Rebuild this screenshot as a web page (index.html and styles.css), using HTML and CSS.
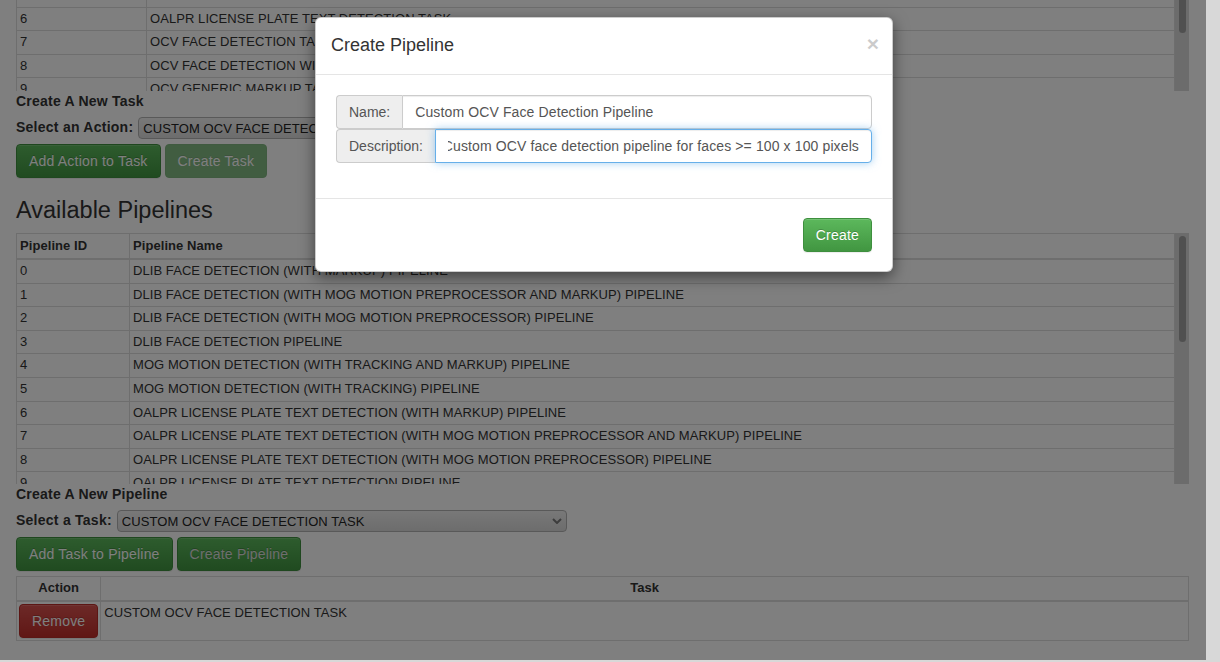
FILE: index.html
```html
<!DOCTYPE html>
<html lang="en">
<head>
<meta charset="utf-8">
<title>Create Pipeline</title>
<link rel="stylesheet" href="styles.css">
</head>
<body>
<div class="screen">
  <div class="viewport">
    <main class="page">
      <div class="scroll-box tasks-box">
        <div class="scroll-view">
          <table class="grid tasks-grid">
            <tbody>
              <tr><td class="id-col">5</td><td>MOG MOTION DETECTION TASK</td></tr>
              <tr><td class="id-col">6</td><td>OALPR LICENSE PLATE TEXT DETECTION TASK</td></tr>
              <tr><td class="id-col">7</td><td>OCV FACE DETECTION TASK</td></tr>
              <tr><td class="id-col">8</td><td>OCV FACE DETECTION WITH MARKUP TASK</td></tr>
              <tr><td class="id-col">9</td><td>OCV GENERIC MARKUP TASK</td></tr>
            </tbody>
          </table>
        </div>
        <div class="scrollbar"><div class="thumb thumb-top"></div></div>
      </div>

      <div class="form-title">Create A New Task</div>
      <div class="select-row">
        <label class="select-label" for="action-select">Select an Action:</label>
        <div class="select-wrap">
          <select id="action-select" class="select">
            <option>CUSTOM OCV FACE DETECTION ACTION</option>
          </select>
          <svg class="chevron" width="10" height="6" viewBox="0 0 10 6"><polyline points="1,1 5,5 9,1" fill="none" stroke="#7a7a7a" stroke-width="2"/></svg>
        </div>
      </div>
      <div class="btn-row">
        <button class="btn btn-success">Add Action to Task</button>
        <button class="btn btn-success" disabled>Create Task</button>
      </div>

      <h3 class="section-title">Available Pipelines</h3>

      <div class="scroll-box pipelines-box">
        <div class="scroll-view">
          <table class="grid pipelines-grid">
            <thead>
              <tr><th class="id-col">Pipeline ID</th><th>Pipeline Name</th></tr>
            </thead>
            <tbody>
              <tr><td>0</td><td>DLIB FACE DETECTION (WITH MARKUP) PIPELINE</td></tr>
              <tr><td>1</td><td>DLIB FACE DETECTION (WITH MOG MOTION PREPROCESSOR AND MARKUP) PIPELINE</td></tr>
              <tr><td>2</td><td>DLIB FACE DETECTION (WITH MOG MOTION PREPROCESSOR) PIPELINE</td></tr>
              <tr><td>3</td><td>DLIB FACE DETECTION PIPELINE</td></tr>
              <tr><td>4</td><td>MOG MOTION DETECTION (WITH TRACKING AND MARKUP) PIPELINE</td></tr>
              <tr><td>5</td><td>MOG MOTION DETECTION (WITH TRACKING) PIPELINE</td></tr>
              <tr><td>6</td><td>OALPR LICENSE PLATE TEXT DETECTION (WITH MARKUP) PIPELINE</td></tr>
              <tr><td>7</td><td>OALPR LICENSE PLATE TEXT DETECTION (WITH MOG MOTION PREPROCESSOR AND MARKUP) PIPELINE</td></tr>
              <tr><td>8</td><td>OALPR LICENSE PLATE TEXT DETECTION (WITH MOG MOTION PREPROCESSOR) PIPELINE</td></tr>
              <tr><td>9</td><td>OALPR LICENSE PLATE TEXT DETECTION PIPELINE</td></tr>
            </tbody>
          </table>
        </div>
        <div class="scrollbar"><div class="thumb thumb-pipelines"></div></div>
      </div>

      <div class="form-title">Create A New Pipeline</div>
      <div class="select-row">
        <label class="select-label" for="task-select">Select a Task:</label>
        <div class="select-wrap">
          <select id="task-select" class="select">
            <option>CUSTOM OCV FACE DETECTION TASK</option>
          </select>
          <svg class="chevron" width="10" height="6" viewBox="0 0 10 6"><polyline points="1,1 5,5 9,1" fill="none" stroke="#7a7a7a" stroke-width="2"/></svg>
        </div>
      </div>
      <div class="btn-row">
        <button class="btn btn-success">Add Task to Pipeline</button>
        <button class="btn btn-success btn-dim">Create Pipeline</button>
      </div>

      <table class="grid action-grid">
        <thead>
          <tr><th class="action-col">Action</th><th class="center">Task</th></tr>
        </thead>
        <tbody>
          <tr>
            <td class="action-cell"><button class="btn btn-danger">Remove</button></td>
            <td>CUSTOM OCV FACE DETECTION TASK</td>
          </tr>
        </tbody>
      </table>
    </main>

    <div class="backdrop"></div>

    <div class="modal">
      <div class="modal-dialog">
        <div class="modal-header">
          <h4 class="modal-title">Create Pipeline</h4>
          <button class="close" type="button">&times;</button>
        </div>
        <div class="modal-body">
          <div class="input-group">
            <span class="addon">Name:</span>
            <div class="field"><div class="field-clip"><span class="field-text">Custom OCV Face Detection Pipeline</span></div></div>
          </div>
          <div class="input-group">
            <span class="addon">Description:</span>
            <div class="field focused"><div class="field-clip end"><span class="field-text">Custom OCV face detection pipeline for faces &gt;= 100 x 100 pixels</span></div></div>
          </div>
        </div>
        <div class="modal-footer">
          <button class="btn btn-success">Create</button>
        </div>
      </div>
    </div>
  </div>
  <div class="vscroll"></div>
</div>
</body>
</html>
```
FILE: styles.css
```css
* {
  box-sizing: border-box;
}

html,
body {
  margin: 0;
  padding: 0;
}

body {
  background: #d8d8d8;
  font-family: "Liberation Sans", Arial, Helvetica, sans-serif;
  font-size: 14px;
  line-height: 1.42857;
  color: #333;
  overflow: hidden;
}

.screen {
  display: flex;
  width: 1220px;
  height: 662px;
}

.viewport {
  position: relative;
  width: 1206px;
  height: 660px;
  overflow: hidden;
  background: #fff;
}

.vscroll {
  width: 14px;
  height: 662px;
  background: #d8d8d8;
}

.page {
  padding: 0 17px 0 16px;
}

/* scrolling table boxes */
.scroll-box {
  display: flex;
}

.tasks-box {
  height: 91px;
}

.pipelines-box {
  height: 251px;
}

.scroll-view {
  flex: 1;
  overflow: hidden;
}

.scrollbar {
  width: 14px;
  background: #d8d8d8;
  padding: 3px 3px 0 4px;
}

.thumb {
  width: 7px;
  background: #a0a0a0;
  border-radius: 4px;
}

.thumb-top {
  height: 33px;
  margin-top: -3px;
  border-radius: 0 0 4px 4px;
}

.thumb-pipelines {
  height: 106px;
}

/* tables */
.grid {
  width: 100%;
  border-collapse: collapse;
  font-size: 13px;
  line-height: 15.6px;
  letter-spacing: 0.07px;
  color: #333;
}

.grid td,
.grid th {
  border: 1px solid #ddd;
  padding: 3px 3px 4px;
  text-align: left;
  vertical-align: top;
}

.grid th {
  font-weight: bold;
  border-bottom-width: 2px;
}

.tasks-grid {
  margin-top: -17px;
}

.tasks-grid .id-col {
  width: 130px;
}

.pipelines-grid th {
  padding-top: 4px;
}

.pipelines-grid .id-col {
  width: 113px;
}

.action-grid {
  margin-top: 5px;
}

.action-grid .action-col {
  width: 84px;
  text-align: center;
}

.action-grid .center {
  text-align: center;
}

.action-grid .action-cell {
  padding: 2px;
}

/* forms */
.form-title {
  font-weight: bold;
  font-size: 14px;
  line-height: 20px;
  letter-spacing: 0.22px;
}

.select-row {
  display: flex;
  align-items: center;
  gap: 5px;
  margin-top: 6px;
  height: 22px;
}

.select-label {
  font-weight: bold;
  font-size: 14px;
  letter-spacing: 0.25px;
}

.select-wrap {
  position: relative;
  width: 450px;
  height: 22px;
}

.select {
  appearance: none;
  -webkit-appearance: none;
  width: 100%;
  height: 22px;
  margin: 0;
  padding: 0 20px 0 4px;
  font-family: "Liberation Sans", Arial, Helvetica, sans-serif;
  font-size: 13px;
  letter-spacing: 0.07px;
  color: #222;
  border: 1px solid #b2b2b2;
  border-radius: 4px;
  background: linear-gradient(#f1f1f1, #dadada);
}

.chevron {
  position: absolute;
  right: 5px;
  top: 8px;
}

.btn-row {
  display: flex;
  gap: 4px;
  margin-top: 5px;
}

.section-title {
  margin: 19px 0 10px;
  font-size: 23.5px;
  font-weight: normal;
  line-height: 26.4px;
  color: #333;
}

/* buttons */
.btn {
  display: inline-block;
  margin: 0;
  padding: 6px 12px;
  font-family: "Liberation Sans", Arial, Helvetica, sans-serif;
  font-size: 14px;
  line-height: 20px;
  letter-spacing: 0.2px;
  border: 1px solid transparent;
  border-radius: 4px;
  color: #fff;
  text-shadow: 0 -1px 0 rgba(0, 0, 0, 0.2);
  box-shadow: inset 0 1px 0 rgba(255, 255, 255, 0.15), 0 1px 1px rgba(0, 0, 0, 0.075);
  cursor: pointer;
}

.btn-success {
  background-image: linear-gradient(to bottom, #5cb85c 0, #419641 100%);
  border-color: #3e8f3e;
}

.btn-success[disabled] {
  background-image: none;
  background-color: #419641;
  opacity: 0.65;
  box-shadow: none;
}

.btn-dim {
  color: #dcdcdc;
}

.btn-danger {
  background-image: linear-gradient(to bottom, #d9534f 0, #c12e2a 100%);
  border-color: #b92c28;
}

/* modal */
.backdrop {
  position: absolute;
  inset: 0;
  background: #000;
  opacity: 0.5;
}

.modal {
  position: absolute;
  inset: 0;
}

.modal-dialog {
  width: 578px;
  margin: 17px 0 0 315px;
  background: #fff;
  border: 1px solid rgba(0, 0, 0, 0.2);
  border-radius: 6px;
  box-shadow: 0 5px 15px rgba(0, 0, 0, 0.5);
}

.modal-header {
  display: flex;
  justify-content: space-between;
  align-items: flex-start;
  padding: 15px;
  border-bottom: 1px solid #e5e5e5;
}

.modal-title {
  margin: 0;
  font-size: 18px;
  font-weight: normal;
  line-height: 1.42857;
  color: #333;
}

.close {
  padding: 0;
  margin: 0 -2px 0 0;
  border: 0;
  background: none;
  font-family: "Liberation Sans", Arial, Helvetica, sans-serif;
  font-size: 21px;
  font-weight: bold;
  line-height: 1;
  color: #000;
  opacity: 0.2;
  text-shadow: 0 1px 0 #fff;
}

.modal-body {
  padding: 20px 20px 35px;
}

.input-group {
  display: flex;
  height: 34px;
}

.addon {
  padding: 6px 12px;
  font-size: 14px;
  line-height: 20px;
  color: #555;
  background: #eee;
  border: 1px solid #ccc;
  border-right: 0;
  border-radius: 4px 0 0 4px;
  white-space: nowrap;
}

.field {
  flex: 1;
  display: flex;
  min-width: 0;
  padding: 6px 12px;
  font-size: 14px;
  line-height: 20px;
  letter-spacing: 0.12px;
  color: #555;
  background: #fff;
  border: 1px solid #ccc;
  border-radius: 0 4px 4px 0;
  white-space: nowrap;
  box-shadow: inset 0 1px 1px rgba(0, 0, 0, 0.075);
}

.field-clip {
  flex: 1;
  display: flex;
  min-width: 0;
  overflow: hidden;
}

.field-clip.end {
  justify-content: flex-end;
}

.field-text {
  flex: none;
}

.field.focused {
  position: relative;
  z-index: 2;
  border-color: #66afe9;
  box-shadow: inset 0 1px 1px rgba(0, 0, 0, 0.075), 0 0 8px rgba(102, 175, 233, 0.6);
}

.modal-footer {
  display: flex;
  justify-content: flex-end;
  padding: 19px 20px 19px;
  border-top: 1px solid #e5e5e5;
}
```
